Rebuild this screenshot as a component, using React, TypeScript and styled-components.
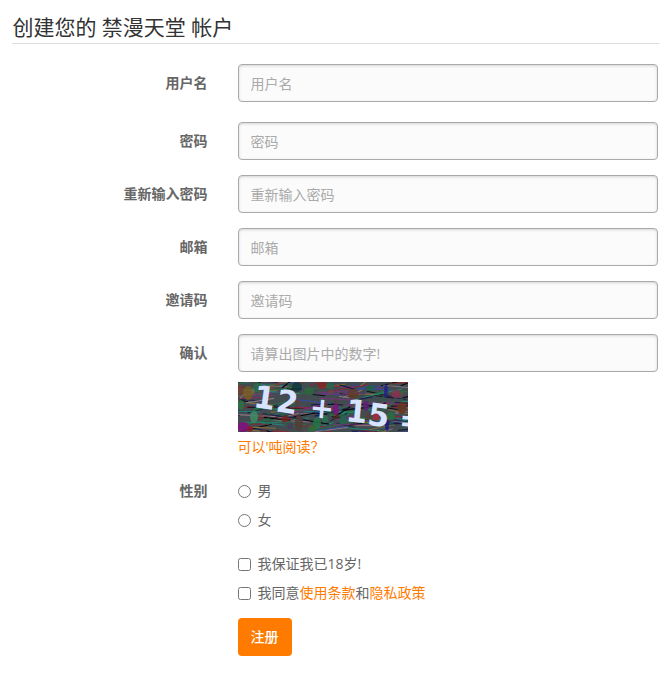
import React from 'react';
import styled, { createGlobalStyle } from 'styled-components';

const GlobalStyle = createGlobalStyle`
  * { box-sizing: border-box; }
  html, body { margin: 0; background: #fff; }
  body {
    font-family: "Open Sans", "Noto Sans CJK SC", sans-serif;
    font-size: 14px;
    line-height: 20px;
    color: #666;
  }
`;

const Page = styled.main`
  width: 670px;
  height: 684px;
  padding: 13px 11px 0 12px;
  background: #fff;
  overflow: hidden;
`;

const Title = styled.h1`
  height: 31px;
  margin: 0 0 20px;
  border-bottom: 1px solid #ddd;
  font-size: 21px;
  font-weight: 400;
  line-height: 29px;
  text-indent: 0.4px;
  color: #333;
`;

const Row = styled.div<{ $gap?: number }>`
  display: grid;
  grid-template-columns: 195.5px 420.5px;
  column-gap: 30px;
  margin-bottom: ${(p) => p.$gap ?? 15}px;
`;

const Label = styled.label<{ $top?: number }>`
  padding-top: ${(p) => p.$top ?? 9}px;
  text-align: right;
  font-weight: 700;
`;

const Field = styled.div`
  grid-column: 2;
  display: flex;
  flex-direction: column;
  align-items: flex-start;
`;

const Input = styled.input`
  display: block;
  width: 100%;
  height: 38px;
  padding: 8px 12px;
  border: 1px solid #aaa;
  border-radius: 4px;
  background: #fbfbfb;
  box-shadow: inset 0 1px 3px rgba(0, 0, 0, 0.16);
  font: inherit;
  color: #555;
  outline: none;
  &::placeholder { color: #aaa; opacity: 1; }
`;

const Captcha = styled.svg`
  display: block;
  width: 170px;
  height: 50px;
  margin: 10px 0 5px;
`;

const Link = styled.a`
  color: #ff7b00;
  text-decoration: none;
`;

const Options = styled.div`
  display: flex;
  flex-direction: column;
  gap: 9px;
`;

const Option = styled.label`
  display: flex;
  align-items: center;
  height: 20px;
`;

const Choice = styled.input`
  width: 13px;
  height: 13px;
  margin: 1px 7px 0 0;
`;

const Submit = styled.button`
  width: 54px;
  height: 38px;
  padding: 0;
  border: 0;
  border-radius: 4px;
  background: #ff7b00;
  color: #fff;
  font: inherit;
  font-weight: 500;
`;

const random = (seed: number) => () => {
  seed = (seed * 1664525 + 1013904223) % 4294967296;
  return seed / 4294967296;
};
const rnd = random(71);
const inks = ['#04060f', '#1b1c4a', '#8a2832', '#23753f', '#7c3082', '#1f8577', '#080a10', '#85703a', '#3a4a98', '#8c7580'];
const strokes = Array.from({ length: 210 }, (_, i) => {
  const x = rnd() * 180 - 14;
  const y = rnd() * 54 - 2;
  const w = 8 + rnd() * 36;
  return { x1: x, y1: y, x2: x + w, y2: y + (rnd() - 0.6) * 16, color: inks[i % inks.length], width: 0.7 + rnd() * 0.6 };
});
const specks = Array.from({ length: 46 }, () => ({
  x: rnd() * 170, y: rnd() * 50, rx: 1.5 + rnd() * 2.2, ry: 1.5 + rnd() * 2.6,
  color: ['#6b342c', '#286040', '#552b68', '#39484b', '#246052', '#67513a'][Math.floor(rnd() * 6)],
}));
const blots: [number, number, number, number, string][] = [
  [2, 8, 4, 5, '#783b2b'], [10, 11, 5, 7, '#765d22'], [19, 5, 4, 5, '#286949'],
  [25, 12, 5, 4, '#49545c'], [3, 23, 3, 5, '#2d7344'], [16, 35, 4, 6, '#3e8963'],
  [5, 45, 6, 5, '#860d82'], [12, 47, 3, 3, '#8b1829'], [47, 37, 4, 3, '#70251f'],
  [59, 5, 5, 5, '#113840'], [61, 41, 4, 8, '#503d36'], [71, 9, 5, 4, '#2c663e'],
  [84, 3, 5, 4, '#832725'], [92, 4, 4, 3, '#27684a'], [98, 27, 3, 6, '#831283'],
  [79, 41, 4, 6, '#237649'], [87, 37, 3, 4, '#257450'], [74, 47, 4, 4, '#376736'],
  [105, 37, 4, 5, '#246650'], [115, 12, 6, 5, '#633b2c'], [128, 24, 3, 5, '#622078'],
  [148, 9, 2, 7, '#202388'], [158, 12, 4, 4, '#8a304f'], [149, 43, 2, 6, '#171b83'],
  [164, 26, 5, 6, '#653323'], [153, 34, 4, 4, '#247143'], [132, 6, 4, 3, '#1b654a'],
];
const glyphs: [string, number, number, number, number][] = [
  ['1', 14.5, 25, 8, 31], ['2', 37, 29, 9, 31], ['+', 71, 35, 5, 29],
  ['1', 107, 39, 6, 31], ['5', 128.5, 42.5, 8, 31], ['=', 160.5, 48, 4, 30],
];

const CaptchaPicture = () => (
  <Captcha viewBox="0 0 170 50" role="img" aria-label="12 + 15 =">
    <rect width="170" height="50" fill="#414b50" />
    {strokes.map((s, i) => (
      <line key={i} x1={s.x1} y1={s.y1} x2={s.x2} y2={s.y2} stroke={s.color} strokeWidth={s.width} />
    ))}
    {specks.map((s, i) => (
      <ellipse key={i} cx={s.x} cy={s.y} rx={s.rx} ry={s.ry} fill={s.color} opacity="0.55" />
    ))}
    {blots.map(([x, y, rx, ry, color], i) => (
      <ellipse key={i} cx={x} cy={y} rx={rx} ry={ry} fill={color} opacity="0.85" />
    ))}
    <g fill="#d8e4ff" fontFamily="DejaVu Sans, sans-serif" fontWeight="700">
      {glyphs.map(([text, x, y, angle, size], i) => (
        <text key={i} x={x} y={y} fontSize={size} transform={`rotate(${angle} ${x} ${y})`}>{text}</text>
      ))}
    </g>
    <ellipse cx="138" cy="35" rx="3.5" ry="3.5" fill="#9a2f3d" />
  </Captcha>
);

const fields = [
  { id: 'username', label: '用户名', type: 'text', gap: 20 },
  { id: 'password', label: '密码', type: 'password', gap: 15 },
  { id: 'confirm', label: '重新输入密码', type: 'password', gap: 15 },
  { id: 'email', label: '邮箱', type: 'text', gap: 15 },
  { id: 'invite', label: '邀请码', type: 'text', gap: 15 },
];

export default function App() {
  return (
    <Page>
      <GlobalStyle />
      <Title>创建您的 禁漫天堂 帐户</Title>
      <form onSubmit={(e) => e.preventDefault()}>
        {fields.map((f) => (
          <Row key={f.id} $gap={f.gap}>
            <Label htmlFor={f.id}>{f.label}</Label>
            <Field><Input id={f.id} type={f.type} placeholder={f.label} /></Field>
          </Row>
        ))}
        <Row $gap={24}>
          <Label htmlFor="answer">确认</Label>
          <Field>
            <Input id="answer" placeholder="请算出图片中的数字!" />
            <CaptchaPicture />
            <Link href="#">可以'吨阅读？</Link>
          </Field>
        </Row>
        <Row $gap={24}>
          <Label as="span" $top={0}>性别</Label>
          <Options>
            <Option><Choice type="radio" name="gender" />男</Option>
            <Option><Choice type="radio" name="gender" />女</Option>
          </Options>
        </Row>
        <Row $gap={15}>
          <Field>
            <Options>
              <Option><Choice type="checkbox" />我保证我已18岁!</Option>
              <Option><Choice type="checkbox" /><span>我同意<Link href="#">使用条款</Link>和<Link href="#">隐私政策</Link></span></Option>
            </Options>
          </Field>
        </Row>
        <Row $gap={0}>
          <Field><Submit type="submit">注册</Submit></Field>
        </Row>
      </form>
    </Page>
  );
}
